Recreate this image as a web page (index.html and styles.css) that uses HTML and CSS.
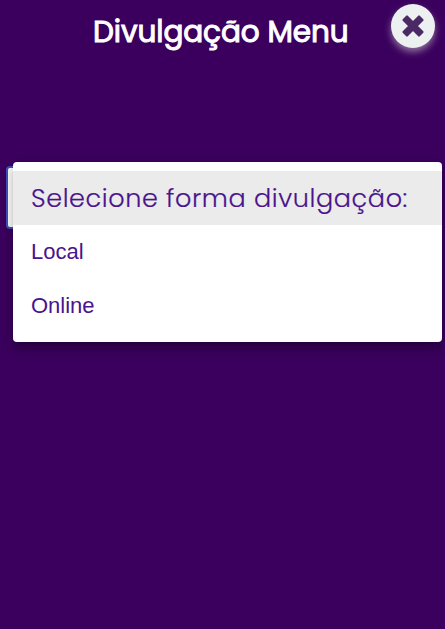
FILE: index.html
```html
<!DOCTYPE html>
<html lang="pt-BR">
<head>
<meta charset="utf-8">
<title>Divulgação Menu</title>
<link rel="stylesheet" href="styles.css">
</head>
<body>
<main class="dialog">
  <header class="header">
    <h1 class="title"><span>Divulgação Menu</span></h1>
    <button class="close" aria-label="Fechar">
      <svg viewBox="0 0 24 24" width="24" height="24"><path d="M6 2.5 12 8.5l6-6 3.5 3.5-6 6 6 6-3.5 3.5-6-6-6 6L2.5 18l6-6-6-6Z"/></svg>
    </button>
  </header>
  <div class="field">
    <div class="select"></div>
    <ul class="menu">
      <li class="option selected"><span>Selecione forma divulgação:</span></li>
      <li class="option"><span>Local</span></li>
      <li class="option"><span>Online</span></li>
    </ul>
  </div>
</main>
</body>
</html>
```

FILE: styles.css
```css
* { box-sizing: border-box; }
body { margin: 0; background: #3b005e; overflow: hidden; }
.dialog { height: 629px; }
.header { position: relative; height: 166px; padding-top: 10px; }
.title {
  margin: 0;
  padding-left: 93px;
  font: 400 29.5px/44px Poppins, Inter, sans-serif;
  letter-spacing: -0.08px;
  -webkit-text-stroke: 1px #fff;
  color: #fff;
  white-space: nowrap;
}
.close {
  position: absolute;
  top: 4px;
  right: 10px;
  width: 44px;
  height: 44px;
  padding: 0;
  border: 0;
  border-radius: 50%;
  display: grid;
  place-items: center;
  background: #ecf0f1;
  box-shadow: 0 4px 7px rgba(225, 225, 215, .5);
}
.close svg { fill: #4b2966; stroke: #4b2966; stroke-width: 2.2; stroke-linejoin: round; }
.field { position: relative; padding: 0 6px; }
.select {
  height: 63px;
  border: 2px solid #3f51b5;
  border-radius: 4px;
  background: #fff;
}
.menu {
  position: absolute;
  top: -4px;
  left: 13px;
  width: 429px;
  height: 180px;
  margin: 0;
  padding: 9px 0;
  list-style: none;
  background: #fff;
  border-radius: 4px;
  box-shadow: 0 5px 5px -3px rgba(0,0,0,.2), 0 8px 10px 1px rgba(0,0,0,.14), 0 3px 14px 2px rgba(0,0,0,.12);
}
.option {
  height: 54px;
  padding-left: 18px;
  font: 400 22px/54px "Liberation Sans", sans-serif;
  color: #4a148c;
  white-space: nowrap;
}
.selected {
  background: #ebebeb;
  font: 300 25.5px/55px Poppins, Inter, sans-serif;
  letter-spacing: .61px;
  -webkit-text-stroke: .2px #4a148c;
}
```
